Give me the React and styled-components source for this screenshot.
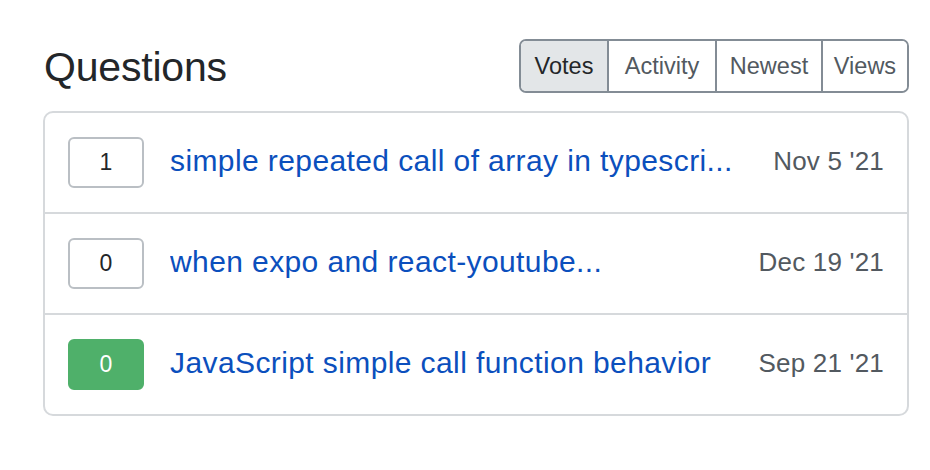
import React from "react";
import styled, { createGlobalStyle } from "styled-components";

const Global = createGlobalStyle`
  html, body { margin: 0; padding: 0; background: #fff; }
  body { font-family: "Liberation Sans", Arial, sans-serif; }
`;

const Page = styled.div`
  width: 866px;
  padding: 39px 0 0 43px;
  display: flex;
  flex-direction: column;
  gap: 18px;
`;

const Header = styled.div`
  display: flex;
  align-items: center;
  justify-content: space-between;
  height: 54px;
  padding-left: 1px;
`;

const Title = styled.h1`
  margin: 0;
  font-size: 41px;
  font-weight: 400;
  color: #232629;
  letter-spacing: -0.2px;
  line-height: 54px;
  padding-top: 2px;
`;

const Group = styled.div`
  display: flex;
  border: 2px solid #838c95;
  border-radius: 7px;
  overflow: hidden;
`;

const Seg = styled.button`
  font-family: "Liberation Sans", Arial, sans-serif;
  font-size: 23.5px;
  box-sizing: border-box;
  height: 50px;
  width: ${(p) => p.$w}px;
  padding: 0;
  border: none;
  border-left: ${(p) => (p.$first ? "none" : "2px solid #838c95")};
  background: ${(p) => (p.$active ? "#e3e6e8" : "#fff")};
  color: ${(p) => (p.$active ? "#232629" : "#525960")};
  cursor: pointer;
`;

const Card = styled.div`
  border: 2px solid #d6d9dc;
  border-radius: 10px;
  display: flex;
  flex-direction: column;
`;

const Row = styled.div`
  display: flex;
  align-items: center;
  height: 99px;
  padding: 0 23px 0 23px;
  border-top: ${(p) => (p.$first ? "none" : "2px solid #d6d9dc")};
`;

const Votes = styled.div`
  flex: 0 0 auto;
  box-sizing: border-box;
  width: 76px;
  height: 51px;
  border-radius: 6px;
  border: 2px solid ${(p) => (p.$accepted ? "#4fb06a" : "#babfc4")};
  background: ${(p) => (p.$accepted ? "#4fb06a" : "#fff")};
  color: ${(p) => (p.$accepted ? "#fff" : "#232629")};
  display: flex;
  align-items: center;
  justify-content: center;
  font-size: 23px;
`;

const Link = styled.a`
  flex: 1 1 auto;
  min-width: 0;
  margin-left: 26px;
  font-size: 30px;
  color: #0b4fbd;
  text-decoration: none;
  white-space: nowrap;
  overflow: hidden;
  text-overflow: ellipsis;
  letter-spacing: 0.4px;
  padding-bottom: 3px;
`;

const DateText = styled.span`
  flex: 0 0 auto;
  margin-left: 30px;
  font-size: 26px;
  color: #525960;
  letter-spacing: 0.2px;
  padding-bottom: 3px;
`;

const tabs = [
  { label: "Votes", w: 86, active: true },
  { label: "Activity", w: 108 },
  { label: "Newest", w: 106 },
  { label: "Views", w: 86 },
];

const rows = [
  { votes: 1, title: "simple repeated call of array in typescri...", date: "Nov 5 '21" },
  { votes: 0, title: "when expo and react-youtube...", date: "Dec 19 '21" },
  { votes: 0, title: "JavaScript simple call function behavior", date: "Sep 21 '21", accepted: true },
];

export default function App() {
  return (
    <>
      <Global />
      <Page>
        <Header>
          <Title>Questions</Title>
          <Group>
            {tabs.map((t, i) => (
              <Seg key={t.label} $first={i === 0} $active={t.active} $w={t.w}>
                {t.label}
              </Seg>
            ))}
          </Group>
        </Header>
        <Card>
          {rows.map((r, i) => (
            <Row key={i} $first={i === 0}>
              <Votes $accepted={r.accepted}>{r.votes}</Votes>
              <Link href="#">{r.title}</Link>
              <DateText>{r.date}</DateText>
            </Row>
          ))}
        </Card>
      </Page>
    </>
  );
}
